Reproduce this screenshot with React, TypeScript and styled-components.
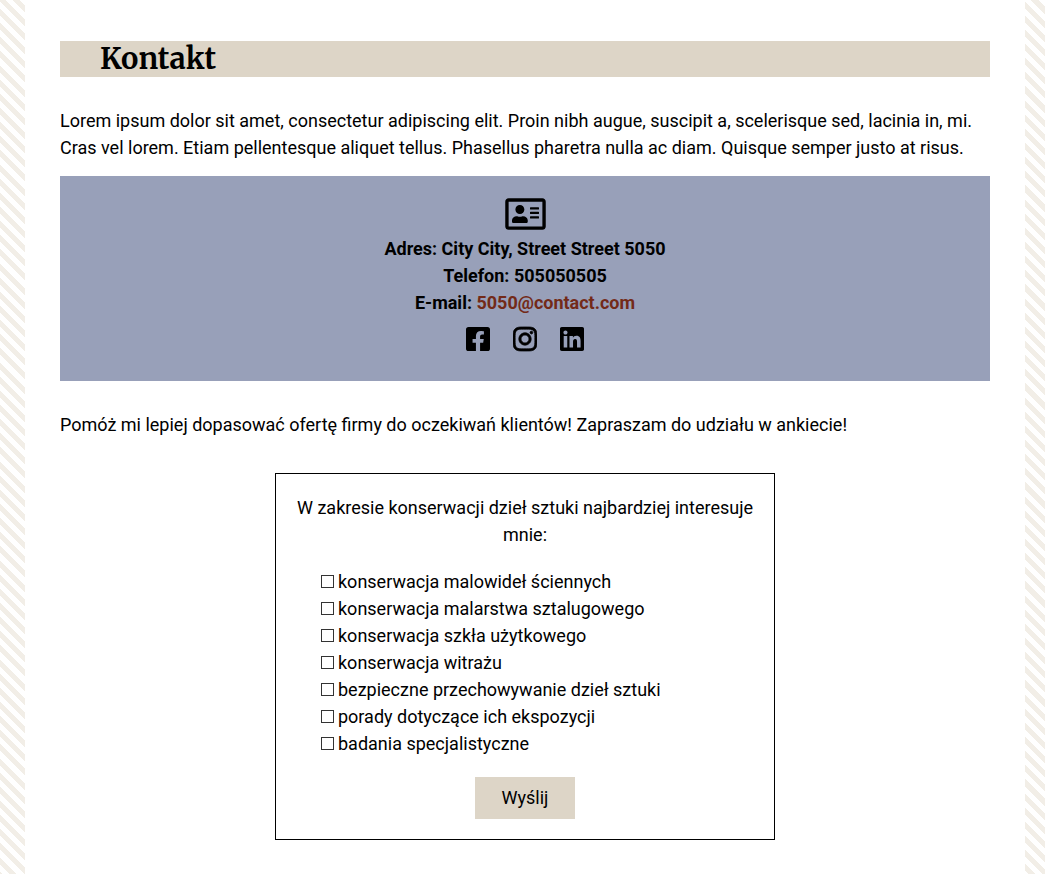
import React from "react";
import styled, { createGlobalStyle } from "styled-components";
import { FaFacebookSquare, FaInstagram, FaLinkedin, FaRegAddressCard } from "react-icons/fa";

const GlobalStyle = createGlobalStyle`
  *, *::before, *::after { box-sizing: border-box; }
  body {
    margin: 0;
    background: #fff;
    color: #000;
    font: 18px/27px Roboto, "Liberation Sans", sans-serif;
  }
`;

const Page = styled.div`
  display: flex;
  justify-content: center;
  min-height: 100vh;
  padding: 0 20px 0 25px;
  background: repeating-linear-gradient(45deg, #f2eee7 0 2px, #fff 2px 7px, #f2eee7 7px 10px);
`;

const Content = styled.main`
  flex: 1;
  max-width: 1000px;
  padding: 41px 35px 34px;
  background: #fff;
`;

const Title = styled.h1`
  margin: 0 0 30px;
  padding: 0 40px;
  background: #ddd5c7;
  font: bold 29px/36px Merriweather, "DejaVu Serif Condensed", "DejaVu Serif", serif;
`;

const Text = styled.p`
  margin: 0;
`;

const ContactCard = styled.address`
  display: flex;
  flex-direction: column;
  align-items: center;
  margin: 15px 0 30px;
  padding: 20px 20px 28px;
  background: #98a0b9;
  font-style: normal;
  font-weight: 700;
  text-align: center;
`;

const CardIcon = styled(FaRegAddressCard)`
  width: 41px;
  height: 36px;
  margin-bottom: 3px;
`;

const MailLink = styled.a`
  color: #732a18;
  text-decoration: none;
`;

const Socials = styled.nav`
  display: flex;
  gap: 23px;
  margin-top: 9px;
`;

const SocialLink = styled.a<{ $outline: number }>`
  display: flex;
  color: inherit;

  svg {
    width: 24px;
    height: 28px;
    stroke-width: ${({ $outline }) => $outline};
  }
`;

const Survey = styled.form`
  display: flex;
  flex-direction: column;
  align-items: center;
  max-width: 500px;
  margin: 35px auto 0;
  padding: 20px;
  border: 1px solid #000;
`;

const Options = styled.fieldset`
  width: 100%;
  min-width: 0;
  margin: 0;
  padding: 0;
  border: 0;
`;

const Question = styled.legend`
  width: 100%;
  margin-bottom: 20px;
  padding: 0;
  text-align: center;
`;

const Option = styled.label`
  display: flex;
  align-items: center;
  gap: 4px;
  padding-left: 25px;
`;

const Checkbox = styled.input`
  appearance: none;
  width: 13px;
  height: 13px;
  margin: 0;
  border: 1px solid #333;
  background: #fff;

  &:checked {
    background: #333;
    box-shadow: inset 0 0 0 2px #fff;
  }
`;

const Submit = styled.button`
  width: 100px;
  height: 42px;
  margin-top: 20px;
  padding: 0 0 2px;
  border: 0;
  background: #ddd5c7;
  color: inherit;
  font: inherit;
  cursor: pointer;
`;

const topics = [
  "konserwacja malowideł ściennych",
  "konserwacja malarstwa sztalugowego",
  "konserwacja szkła użytkowego",
  "konserwacja witrażu",
  "bezpieczne przechowywanie dzieł sztuki",
  "porady dotyczące ich ekspozycji",
  "badania specjalistyczne",
];

const socials = [
  { name: "Facebook", Icon: FaFacebookSquare, outline: 0 },
  { name: "Instagram", Icon: FaInstagram, outline: 14 },
  { name: "LinkedIn", Icon: FaLinkedin, outline: 0 },
];

export default function App() {
  return (
    <>
      <GlobalStyle />
      <Page>
        <Content>
          <Title>Kontakt</Title>
          <Text>
            Lorem ipsum dolor sit amet, consectetur adipiscing elit. Proin nibh augue, suscipit a,
            scelerisque sed, lacinia in, mi. Cras vel lorem. Etiam pellentesque aliquet tellus.
            Phasellus pharetra nulla ac diam. Quisque semper justo at risus.
          </Text>
          <ContactCard>
            <CardIcon aria-hidden />
            <Text>Adres: City City, Street Street 5050</Text>
            <Text>Telefon: 505050505</Text>
            <Text>
              E-mail: <MailLink href="mailto:5050@contact.com">5050@contact.com</MailLink>
            </Text>
            <Socials>
              {socials.map(({ name, Icon, outline }) => (
                <SocialLink key={name} href="#" aria-label={name} $outline={outline}>
                  <Icon />
                </SocialLink>
              ))}
            </Socials>
          </ContactCard>
          <Text>
            Pomóż mi lepiej dopasować ofertę firmy do oczekiwań klientów! Zapraszam do udziału w
            ankiecie!
          </Text>
          <Survey onSubmit={(event) => event.preventDefault()}>
            <Options>
              <Question>W zakresie konserwacji dzieł sztuki najbardziej interesuje mnie:</Question>
              {topics.map((topic) => (
                <Option key={topic}>
                  <Checkbox type="checkbox" name="topic" value={topic} />
                  {topic}
                </Option>
              ))}
            </Options>
            <Submit type="submit">Wyślij</Submit>
          </Survey>
        </Content>
      </Page>
    </>
  );
}
